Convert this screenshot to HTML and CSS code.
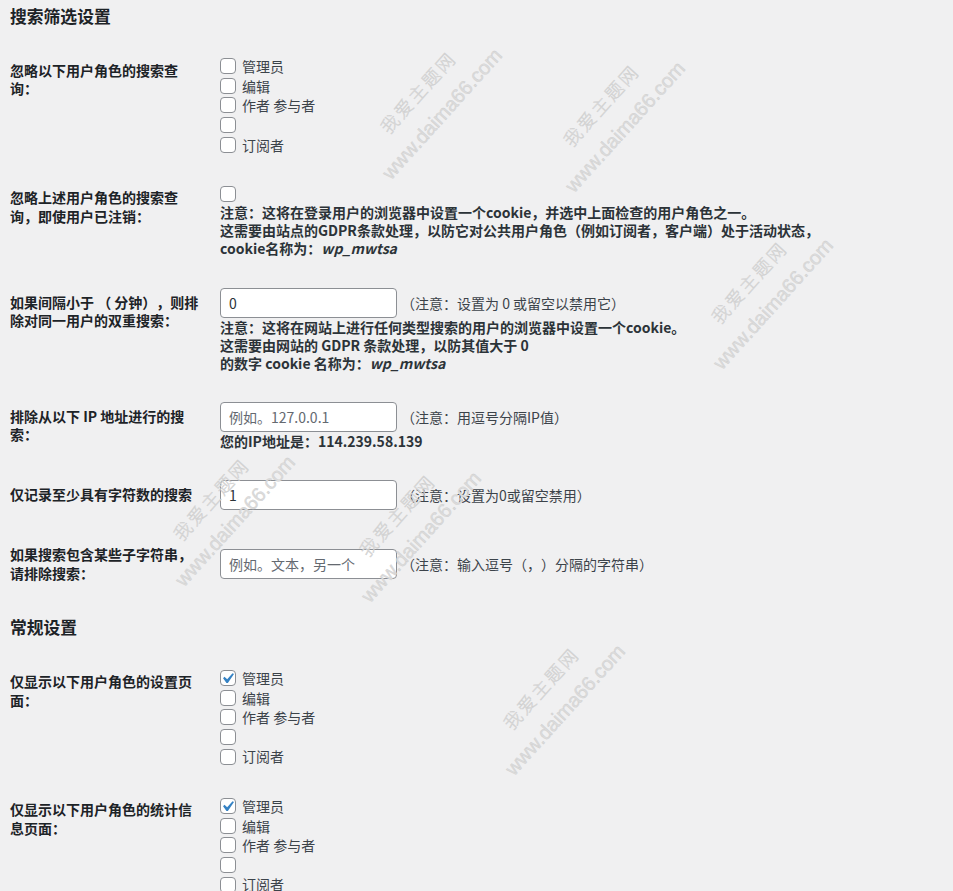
FILE: index.html
```html
<!DOCTYPE html>
<html lang="zh-CN">
<head>
<meta charset="utf-8">
<title>搜索筛选设置</title>
<link rel="stylesheet" href="styles.css">
</head>
<body>
<div class="wrap">
  <h2 class="section-title first">搜索筛选设置</h2>
  <div class="form-table">
    <div class="row">
      <div class="label">忽略以下用户角色的搜索查询：</div>
      <div class="field">
        <fieldset class="roles">
          <label><span class="cbox"><input type="checkbox"></span>管理员</label>
          <label><span class="cbox"><input type="checkbox"></span>编辑</label>
          <label><span class="cbox"><input type="checkbox"></span>作者 参与者</label>
          <label><span class="cbox"><input type="checkbox"></span></label>
          <label><span class="cbox"><input type="checkbox"></span>订阅者</label>
        </fieldset>
      </div>
    </div>

    <div class="row">
      <div class="label">忽略上述用户角色的搜索查询，即使用户已注销：</div>
      <div class="field">
        <label class="single"><span class="cbox"><input type="checkbox"></span></label>
        <p class="note">注意：这将在登录用户的浏览器中设置一个cookie，并选中上面检查的用户角色之一。<br>这需要由站点的GDPR条款处理，以防它对公共用户角色（例如订阅者，客户端）处于活动状态，<br>cookie名称为：<em>wp_mwtsa</em></p>
      </div>
    </div>

    <div class="row">
      <div class="label">如果间隔小于 （ 分钟），则排除对同一用户的双重搜索：</div>
      <div class="field top">
        <div class="inline"><input class="text" type="text" value="0"><span class="hint">（注意：设置为 0 或留空以禁用它）</span></div>
        <p class="note">注意：这将在网站上进行任何类型搜索的用户的浏览器中设置一个cookie。<br>这需要由网站的 GDPR 条款处理，以防其值大于 0<br>的数字 cookie 名称为：<em>wp_mwtsa</em></p>
      </div>
    </div>

    <div class="row">
      <div class="label">排除从以下 IP 地址进行的搜索：</div>
      <div class="field">
        <div class="inline"><input class="text" type="text" placeholder="例如。127.0.0.1"><span class="hint">（注意：用逗号分隔IP值）</span></div>
        <p class="note">您的IP地址是：114.239.58.139</p>
      </div>
    </div>

    <div class="row">
      <div class="label">仅记录至少具有字符数的搜索</div>
      <div class="field">
        <div class="inline"><input class="text" type="text" value="1"><span class="hint">（注意：设置为0或留空禁用）</span></div>
      </div>
    </div>

    <div class="row">
      <div class="label">如果搜索包含某些子字符串，请排除搜索：</div>
      <div class="field">
        <div class="inline"><input class="text" type="text" placeholder="例如。文本，另一个"><span class="hint">（注意：输入逗号（，）分隔的字符串）</span></div>
      </div>
    </div>
  </div>

  <h2 class="section-title">常规设置</h2>
  <div class="form-table">
    <div class="row">
      <div class="label">仅显示以下用户角色的设置页面：</div>
      <div class="field">
        <fieldset class="roles">
          <label><span class="cbox"><input type="checkbox" checked><svg class="tick" viewBox="0 0 20 20"><path d="M14.83 4.89l1.34.94-5.81 8.38H9.02L5.78 9.67l1.34-1.25 2.57 2.4z"/></svg></span>管理员</label>
          <label><span class="cbox"><input type="checkbox"></span>编辑</label>
          <label><span class="cbox"><input type="checkbox"></span>作者 参与者</label>
          <label><span class="cbox"><input type="checkbox"></span></label>
          <label><span class="cbox"><input type="checkbox"></span>订阅者</label>
        </fieldset>
      </div>
    </div>

    <div class="row">
      <div class="label">仅显示以下用户角色的统计信息页面：</div>
      <div class="field">
        <fieldset class="roles">
          <label><span class="cbox"><input type="checkbox" checked><svg class="tick" viewBox="0 0 20 20"><path d="M14.83 4.89l1.34.94-5.81 8.38H9.02L5.78 9.67l1.34-1.25 2.57 2.4z"/></svg></span>管理员</label>
          <label><span class="cbox"><input type="checkbox"></span>编辑</label>
          <label><span class="cbox"><input type="checkbox"></span>作者 参与者</label>
          <label><span class="cbox"><input type="checkbox"></span></label>
          <label><span class="cbox"><input type="checkbox"></span>订阅者</label>
        </fieldset>
      </div>
    </div>
  </div>
</div>

<div class="wm wm1"><span class="wm-cn">我爱主题网</span><span class="wm-url">www.daima66.com</span></div>
<div class="wm wm2"><span class="wm-cn">我爱主题网</span><span class="wm-url">www.daima66.com</span></div>
<div class="wm wm3"><span class="wm-cn">我爱主题网</span><span class="wm-url">www.daima66.com</span></div>
<div class="wm wm4"><span class="wm-cn">我爱主题网</span><span class="wm-url">www.daima66.com</span></div>
<div class="wm wm5"><span class="wm-cn">我爱主题网</span><span class="wm-url">www.daima66.com</span></div>
<div class="wm wm6"><span class="wm-cn">我爱主题网</span><span class="wm-url">www.daima66.com</span></div>
</body>
</html>
```

FILE: styles.css
```css
html, body {
  margin: 0;
  padding: 0;
  background: #f0f0f1;
}

body {
  position: relative;
  font-family: "Noto Sans CJK SC", "Noto Sans", sans-serif;
  font-size: 14px;
  line-height: 18.2px;
  color: #3c434a;
  text-spacing-trim: space-all;
  overflow: hidden;
  height: 891px;
}

.wrap {
  padding: 0 10px;
}

.section-title {
  font-size: 16.8px;
  font-weight: 700;
  line-height: 23px;
  margin: 14.5px 0 13px;
  color: #1d2327;
}

.section-title.first {
  margin-top: 4.5px;
}

.form-table {
  display: flex;
  flex-direction: column;
}

.row {
  display: grid;
  grid-template-columns: 200px 1fr;
}

.label {
  padding: 20px 10px 20px 0;
  font-weight: 700;
  color: #1d2327;
  line-height: 18.2px;
}

.field {
  padding: 15px 10px;
  align-self: center;
}

.field.top {
  align-self: start;
}

.roles {
  border: 0;
  margin: 0;
  padding: 0;
  min-width: 0;
}

.roles label,
.single {
  display: flex;
  align-items: center;
  height: 19.6px;
  padding-top: 2px;
  box-sizing: border-box;
  color: #3c434a;
}

.cbox {
  position: relative;
  flex: none;
  width: 16px;
  height: 16px;
  margin-right: 6px;
}

.cbox input {
  -webkit-appearance: none;
  appearance: none;
  display: block;
  margin: 0;
  width: 16px;
  height: 16px;
  box-sizing: border-box;
  border: 1px solid #8c8f94;
  border-radius: 4px;
  background: #fff;
}

.cbox .tick {
  position: absolute;
  left: -3px;
  top: -2px;
  width: 21px;
  height: 21px;
  fill: #3582c4;
  pointer-events: none;
}

.note {
  margin: 0;
  font-weight: 700;
  color: #2c3338;
  white-space: nowrap;
}

.note em {
  font-style: italic;
  font-weight: 700;
}

.inline {
  display: flex;
  align-items: center;
  height: 30px;
}

.text {
  width: 177px;
  height: 30px;
  box-sizing: border-box;
  margin: 0;
  padding: 0 8px;
  border: 1px solid #8c8f94;
  border-radius: 4px;
  background: #fff;
  color: #2c3338;
  font-family: "Noto Sans CJK SC", "Noto Sans", sans-serif;
  font-size: 14px;
  outline: none;
}

.text::placeholder {
  color: #646970;
  opacity: 1;
}

.hint {
  margin-left: 4px;
  white-space: nowrap;
  color: #3c434a;
}

/* watermarks */
.wm {
  position: absolute;
  width: max-content;
  transform: translate(-50%, -50%) rotate(-48deg);
  text-align: center;
  white-space: nowrap;
  color: #dcdcdc;
  -webkit-text-stroke: 0.35px #cbcbcb;
  pointer-events: none;
}

.wm-cn {
  display: block;
  font-family: "Noto Sans CJK SC", sans-serif;
  font-size: 18px;
  font-weight: 300;
  letter-spacing: 2.5px;
  line-height: 33px;
}

.wm-url {
  display: block;
  font-family: "Liberation Sans", sans-serif;
  font-size: 20px;
  line-height: 33px;
}

.wm1 { left: 430px; top: 103px; }
.wm2 { left: 613px; top: 116px; }
.wm3 { left: 761px; top: 293px; }
.wm4 { left: 223px; top: 510px; }
.wm5 { left: 409px; top: 526px; }
.wm6 { left: 553px; top: 699px; }
```
